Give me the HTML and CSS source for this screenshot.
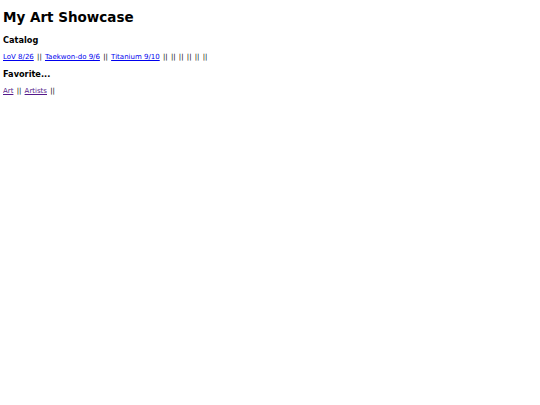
FILE: index.html
```html
<!DOCTYPE html>
<html>
<head>
<meta charset="utf-8">
<link rel="stylesheet" href="styles.css">
</head>
<body>
<h1 class="title">My Art Showcase</h1>
<h2 class="section">Catalog</h2>
<p class="links"><a class="new" href="#lov">LoV 8/26</a> || <a class="new" href="#tkd">Taekwon-do 9/6</a> || <a class="new" href="#ti">Titanium 9/10</a> || || || || || ||</p>
<h2 class="section">Favorite...</h2>
<p class="links"><a class="seen" href="#art">Art</a> || <a class="seen" href="#artists">Artists</a> ||</p>
</body>
</html>
```
FILE: styles.css
```css
body {
  margin: 3px;
  font-family: "DejaVu Sans", sans-serif;
  color: #000;
  background: #fff;
}
.title {
  font-size: 13.5px;
  font-weight: bold;
  line-height: 16px;
  margin: 6px 0 10px 0;
}
.section {
  font-size: 8.2px;
  font-weight: bold;
  line-height: 10px;
  margin: 0 0 7px 0;
}
.links {
  font-size: 7px;
  word-spacing: 1px;
  line-height: 10px;
  margin: 0 0 7px 0;
  color: #000;
}
.links a {
  word-spacing: 0;
}
.new { color: #0000ee; }
.seen { color: #551a8b; }
```
